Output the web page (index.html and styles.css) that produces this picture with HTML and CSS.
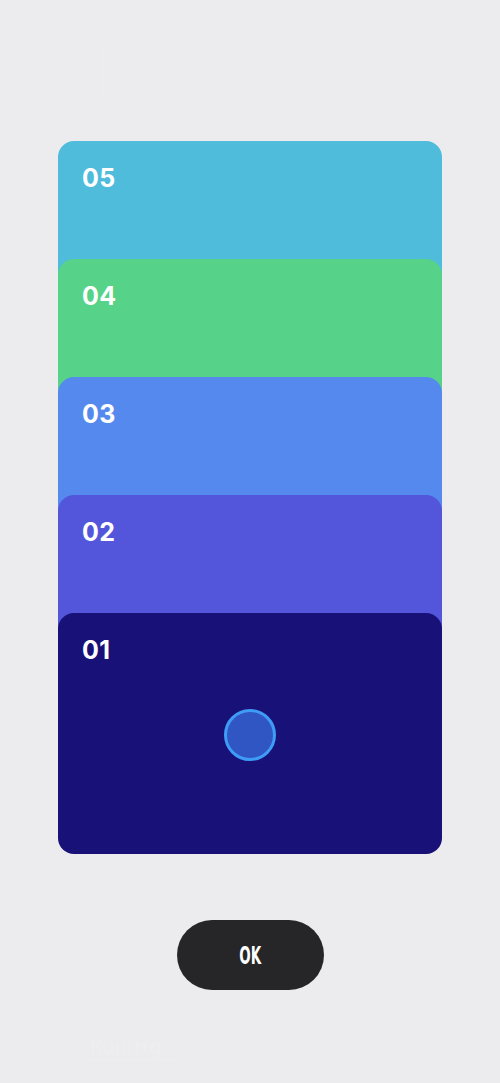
FILE: index.html
```html
<!DOCTYPE html>
<html>
<head>
<meta charset="utf-8">
<link rel="stylesheet" href="styles.css">
</head>
<body>
<div class="screen">
  <div class="top-ghost">|</div>
  <div class="stack">
    <div class="card c5"><span class="num">05</span></div>
    <div class="card c4"><span class="num">04</span></div>
    <div class="card c3"><span class="num">03</span></div>
    <div class="card c2"><span class="num">02</span></div>
    <div class="card c1"><span class="num">01</span><div class="dot"></div></div>
  </div>
  <div class="actions"><button class="ok"><span class="ok-label">OK</span></button></div>
  <div class="ghost">Kuurrrg</div>
</div>
</body>
</html>
```
FILE: styles.css
```css
html, body {
  margin: 0;
  padding: 0;
  background: #ececee;
}
.screen {
  width: 500px;
  height: 1083px;
  overflow: hidden;
  display: flex;
  flex-direction: column;
  font-family: Inter, "Noto Sans", sans-serif;
}
.top-ghost {
  height: 141px;
  box-sizing: border-box;
  padding: 50px 0 0 96px;
  color: #ededef;
  font-size: 40px;
  line-height: 40px;
}
.stack {
  display: flex;
  flex-direction: column;
  padding: 0 58px;
}
.card {
  position: relative;
  height: 241px;
  border-radius: 16px;
  box-sizing: border-box;
  padding: 22px 24px;
  margin-top: -123px;
}
.card:first-child { margin-top: 0; }
.num {
  color: #ffffff;
  font-weight: 700;
  font-size: 25px;
  line-height: 30px;
  letter-spacing: 0.3px;
}
.c5 { background: #4fbcdc; }
.c4 { background: #57d389; }
.c3 { background: #5589ee; }
.c2 { background: #5356db; }
.c1 {
  background: #171178;
  display: flex;
  flex-direction: column;
  align-items: flex-start;
}
.dot {
  align-self: center;
  margin-top: 44px;
  width: 52px;
  height: 52px;
  box-sizing: border-box;
  border-radius: 50%;
  border: 3px solid #3f9cf6;
  background: #3056c4;
}
.actions {
  display: flex;
  justify-content: center;
  margin-top: 66px;
}
.ok {
  width: 147px;
  height: 70px;
  border: none;
  border-radius: 35px;
  background: #262628;
  color: #ffffff;
  padding: 0;
  display: flex;
  align-items: center;
  justify-content: center;
}
.ok-label {
  display: inline-block;
  font-family: "DejaVu Sans", sans-serif;
  font-stretch: condensed;
  font-weight: 700;
  font-size: 25px;
  line-height: 26px;
  transform: scaleX(0.6);
  margin-top: 2px;
}
.ghost {
  margin: 45px 0 0 90px;
  color: #eeeef0;
  font-size: 20px;
  border-bottom: 1px solid #eeeef0;
  width: 88px;
}
```
